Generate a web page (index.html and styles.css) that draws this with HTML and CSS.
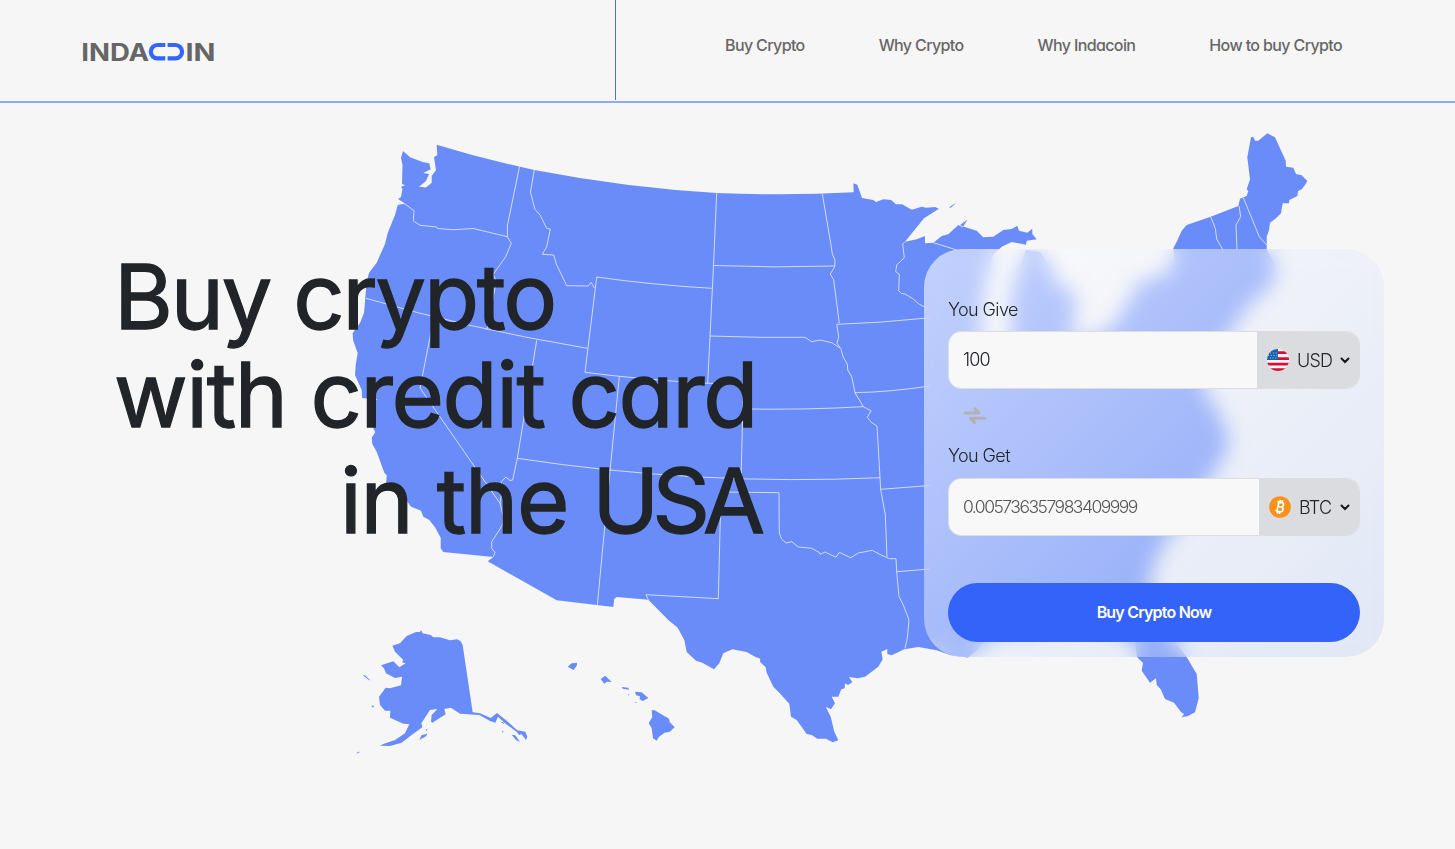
FILE: index.html
```html
<!DOCTYPE html>
<html lang="en">
<head>
<meta charset="utf-8">
<title>Indacoin</title>
<link rel="stylesheet" href="styles.css">
</head>
<body>
<header class="header">
  <div class="brand">
    <svg class="logo" width="144" height="32" viewBox="76 36 144 32" role="img" aria-label="Indacoin">
      <text class="logo-text" x="81.2" y="60.500" textLength="68" lengthAdjust="spacingAndGlyphs">INDA</text>
      <path d="M165.300 45H157.500a6.700 6.700 0 0 0 0 13.400H165.300M167.600 45H175.400a6.700 6.700 0 0 1 0 13.400H167.600" fill="none" stroke="#3366ff" stroke-width="4.200"/>
      <text class="logo-text" x="185.500" y="60.500" textLength="30" lengthAdjust="spacingAndGlyphs">IN</text>
    </svg>
  </div>
  <nav class="nav">
    <a>Buy Crypto</a>
    <a>Why Crypto</a>
    <a>Why Indacoin</a>
    <a>How to buy Crypto</a>
  </nav>
</header>
<main class="hero">
  <svg class="map" width="1455" height="746" viewBox="0 103 1455 746" aria-hidden="true">
    <g class="land">
      <path d="M403 151L410 157.3 423.3 162.3 429.3 163.3 430.7 169.3 423.3 173 429 174 426 181 419 186.7 426 187.5 431.7 182.7 431.7 176 436 170 434 157.3 437.3 155 436.7 144.7Q478 157.500 520 166.700L534.300 170Q625 187.500 716.700 193Q788 196 853.700 192.300L853.300 183.300 857.300 184.700 862 198 873.300 200 876 202 883.300 199.300 891 200 896 204.300 902 204.300 911.700 209.700 921.700 206.700 926 207.700 935 207 939 208.700 924 218.300 905 241.700 916.700 239.300 925 236 925 243.300 933.300 242.700 941.700 236 948.300 234.300 958.300 225 976.700 230.700 983.300 237.300 993.300 236.700 1003.300 230 1011.700 229 1017.300 225.700 1019 230.700 1027.300 232.700 1032.300 228.700 1032.300 234 1036.700 239.300 1026.700 240.700 1026 244.700 1011.700 242 1001.700 246.700 993 255 985 285 980 330 985 350 1006 350 1012 335 1010 300 1016 275 1026 250 1040 252 1053 270 1056 285 1072 290 1077 312 1068 337 1085 340 1112 328 1130 300 1138 283 1165 275 1175 262 1173.300 248.300 1176.700 241.700 1181.700 230.700 1186.700 225 1210.700 216.700 1238.300 206 1240 198.700 1246.700 196 1248.300 191 1246.700 189.300 1250 179.300 1247.300 157.300 1251 137.300 1253.300 136.700 1255 140.700 1258.300 140.700 1267.300 133.300 1275 137.300 1285.700 160.700 1286 166.700 1293.300 167.700 1296 174 1301.700 175.300 1307.300 181 1305 185 1301.700 189.300 1298 191 1297.300 196 1289.300 200 1289 203.300 1282.700 203.300 1281 213.300 1276 218.300 1270 222.700 1269 230 1266.700 236.700 1266.700 250 1274 262 1276 275 1268 288 1250 303 1235 325 1220 345 1205 375 1202 390 1216 407 1229 438 1225 455 1208 480 1190 515 1168 537 1155 560 1148 590 1150 610 1170 635 1186 656 1196.700 674 1198.700 698.300 1195 712.300 1188 716 1181.700 717.300 1184 714 1181 712 1174 702.700 1165 699 1160.700 689.300 1156.700 685 1156 678.300 1150 682.700 1141.700 670.700 1143 663 1137 657 1135 640 1110 628 1080 622 1040 630 1000 634 984 642 976 651 968 657.500 950 655 936.700 650.300 918.300 647 904.300 649.300 891.700 655.300 887.300 654 887.300 649 881.300 651.700 882.700 659.300 878.300 666.700 865 676.700 857.700 678.300 849 677 852.300 682.300 848 685 845 683.300 844.700 688.300 841.300 689.300 838.300 696.700 831.700 696.700 835 703.300 831 709.300 825.700 706.700 830.700 716.700 834.300 731.700 838.300 740.300 832.700 742.300 826 738.700 817.300 738.700 811.700 735 806.700 734 796.700 720 791 716.700 789.300 703.700 779.300 692.700 773.300 686.700 766.700 672.700 765.700 667.300 760 661.700 760.300 658.700 755 656.700 746.700 652 732.300 649.300 723.300 653.300 719.300 663.300 714 669.300 702.300 662.700 696 660.700 686.700 652 684.300 640 677.700 627.700 668.300 620 648.300 599.700 617 597 614.300 598.700 613.300 607 556.700 600.300 487.700 561.300 493.300 557 443.300 552 440.700 548.300 440.700 537.700 435 527.300 429.300 520 423.300 516.700 421 510.700 411 506.700 405 498 386 485 386.700 475.300 384.300 472.700 376.700 451.700 372.300 444 371.700 437.700 375.300 432 373 428 373 401 378 399.500 372 399 362 398 361.700 390 355 375 355.700 365 357.700 353 353 340 352.700 333 360 323 364 313 366 290 366.700 281.700 369 272.700 376.700 262.700 385 244 387.700 233 395 215 397.700 205 405 203.500 398 199 401 197 402.500 189 401 187 405 185 402 184 402.500 165 401 158Z"/>
      <path d="M949 208.500L950.500 206.300 956.500 202.800 952 206.800ZM960 225L967.300 219.700 963.300 226.500Z"/>
      <g transform="translate(340 610) scale(.33333)">
        <path d="M157 107L180 100 200 78 228 66 240 66 243 60 248 70 272 75 280 82 300 82 330 91 352 88 362 94 368 105 398 307 420 310 452 324 471 309 500 332 532 361 556 365 562 380 558 390 545 373 537 375 530 365 495 340 474 320 466 338 450 333 418 315 360 311 333 293 313 297 317 313 277 338 273 335 275 315 292 297 270 300 244 340 247 352 215 375 185 398 150 408 120 407 130 402 165 390 195 370 208 343 190 341 150 323 151 302 135 302 120 285 117 260 137 233 150 235 183 226 186 200 165 204 138 190 132 175 123 166 160 154 178 172 197 160 186 157 190 150 165 125Z"/>
        <path d="M238 390L245 375 262 371 258 379ZM515 374L526 376 540 396 528 390ZM483 336L490 336 492 343ZM486 360L491 366 488 368ZM49 432L54 425 60 426ZM68 196L75 196 91 211 88 211ZM93 287L102 287 100 293ZM256 359L263 357 260 363Z"/>
        <path d="M683 170L695 160 711 158 711 166 701 180ZM782 207L796 197 815 216 800 215 793 221ZM845 231L865 233 867 239 848 236ZM864 252L869 254 866 257ZM886 275L891 278 887 280ZM885 245L905 247 925 264 908 273 899 268 900 259 888 256ZM935 301L944 301 987 326 989 336 1004 352 989 365 974 368 957 380 950 392 939 385 935 354 926 340 937 321Z"/>
      </g>
    </g>
    <g class="borders">
      <path d="M397.700 203L405 204 414 210.700 413.300 221 420 225.300 436.700 227 437.500 228.500 453.300 229.700 473.300 228.500 507.300 236.700"/>
      <path d="M519.500 166.700L507.500 225 507.300 236.700 511.300 243.300 505.700 256.700 493.300 274.300 496.300 281.700 486.700 330"/>
      <path d="M534.300 170L530.500 192 533.300 203.300 535 209.300 540 215 546.700 228.300 550.300 229 546.700 246.700 542.300 254.300 553.700 255 556.700 265 566.700 285.700 588.300 286 591 282.300 594.700 288.300"/>
      <path d="M711.700 288.300Q653 285 596.700 277L585 372.300Q645 380 707.700 383.300M716.700 193L713.500 265.500 707.700 383.300L743.500 384.300 741 480"/>
      <path d="M366 298.300Q466 328 587.300 348.300M433 322L420 388 500 503.300M536.700 340.300L517.300 458.300"/>
      <path d="M517.300 458.300L512.700 480 510 480.500 506 477 501.300 481.700 501.300 495 500 503 503.300 516.700 502.700 524 499.300 530 491.700 541.700 491.700 548.300 495 552.300 493.300 557"/>
      <path d="M517.300 458.300Q700 486 880 477.700M619.300 376.700L610 471.300 597.300 605.300"/>
      <path d="M646 594.700L648.300 599.700M646 594.700L718.300 598.700 721 492 779 492.700 779.300 533.300 781.700 539 786 543 791.700 541.700 798.300 547 806.700 547.700 811.700 548.300 819 552.300 820 554.300 825 552 836 557.300 839.300 552.300 850.700 557.700 858.300 553 872.300 550.300 881.700 555.300 889.300 558.700 896 558.700 896.700 571.700 899 596.700 903.300 605 909 620 907.300 638.300 905 648.300"/>
      <path d="M822.300 194L831 245 832.300 254 835 260 834.700 266.700 830.300 274 833.700 280 839.300 323.300M836.700 324.300L838.700 336.700 837 343.300 840.700 348.300 843.300 357.300 847.300 364 847.700 370 851.700 376.700 855 392.700 863.300 406.700 871 410.700 867.300 417.300 871.700 422.700 877 426 880 477.700 880.700 489.300 885.300 515 887 556.700"/>
      <path d="M713.500 265.500Q774 268 834.700 266M836.700 324.300Q880 323 924 318.300L930 318M710 336L760 337.300 805 337.300 811.700 341.700 820 340 831.700 342.700 840 348M743 409Q806 410 863.300 406.700M855 392.700Q890 392 930 386M880.700 489.300L930 485.500M896.700 571.700L930 569"/>
      <path d="M905 241.700L902.700 244 904.300 257.700 896.700 265 895.700 271.700 899.300 274.300 898.700 290.700 901.500 293.500 905 294 913.300 299 919.300 304.300 927 308M933.300 242.700L957 250M959 225L963 227"/>
      <path d="M1210.700 216.700L1215.300 228.300 1216.700 239 1223 250M1239 206L1240.700 216.700 1236 225 1237 250M1243.300 197.700L1259.300 236.700 1266.700 245"/>
    </g>
  </svg>
  <h1 class="title">
    <span class="line l1">Buy crypto</span>
    <span class="line l2">with credit card</span>
    <span class="line l3">in the <span class="usa">USA</span></span>
  </h1>
  <section class="card">
    <div class="label">You Give</div>
    <div class="field">
      <span class="value give">100</span>
      <span class="currency usd">
        <svg class="coin" width="22" height="22" viewBox="0 0 22 22">
          <clipPath id="flag"><circle cx="11" cy="11" r="11"/></clipPath>
          <g clip-path="url(#flag)">
            <path d="M0 0H22V22H0Z" fill="#f5f5f5"/>
            <path d="M0 2.200H22V5H0ZM0 8.200H22V11H0ZM0 13.800H22V16.600H0ZM0 19.200H22V22H0Z" fill="#d80f34"/>
            <path d="M0 0H11V11H0Z" fill="#1763ad"/>
            <path d="M3 4H11M1 6.500H11M0 9H11" stroke="#a9c5e4" stroke-width="1" stroke-dasharray="1 1.800"/>
          </g>
        </svg>
        <span class="code">USD</span>
        <svg class="chevron" width="10" height="7" viewBox="0 0 10 7"><path d="M1.500 1.500L5 5 8.500 1.500"/></svg>
      </span>
    </div>
    <svg class="swap" width="24" height="18" viewBox="0 0 24 18"><path d="M2 6H16L12 1.800M22 11.300H7.500L11.500 15.700M13 3.500L15 5.500M9.500 12.500L11 14.500"/></svg>
    <div class="label second">You Get</div>
    <div class="field">
      <span class="value get">0.005736357983409999</span>
      <span class="currency btc">
        <svg class="coin" width="22" height="22" viewBox="0 0 22 22">
          <circle cx="11" cy="11" r="10.800" fill="#f7931a"/>
          <g transform="rotate(13 11 11)" fill="none" stroke="#fff" stroke-width="1.700"><path d="M7.200 6.300H11.700a2.200 2.200 0 0 1 0 4.500H9M8.900 6.300V15.500M7.200 15.500H12.200a2.350 2.350 0 0 0 0-4.700M9.800 4V6.300M12 4V6.500M9.800 15.500V18M12 15.500V18"/></g>
        </svg>
        <span class="code">BTC</span>
        <svg class="chevron" width="10" height="7" viewBox="0 0 10 7"><path d="M1.500 1.500L5 5 8.500 1.500"/></svg>
      </span>
    </div>
    <button class="buy">Buy Crypto Now</button>
  </section>
</main>
</body>
</html>
```
FILE: styles.css
```css
* { box-sizing: border-box; }
body {
  margin: 0;
  height: 849px;
  overflow: hidden;
  background: #f6f6f6;
  color: #212529;
  font-family: Inter, "Open Sans", sans-serif;
  font-feature-settings: "cv11";
}
.header {
  display: flex;
  height: 103px;
  border-bottom: 2px solid #92aaf3;
}
.brand {
  width: 616px;
  height: 100px;
  padding: 36px 0 0 76px;
  border-right: 1px solid #4b73f1;
}
.logo { display: block; }
.logo-text { font: 700 24px Inter, sans-serif; fill: #666; }
.nav {
  display: flex;
  gap: 74px;
  padding: 35px 0 0 109px;
  font-size: 16px;
  font-weight: 500;
  line-height: 20px;
  letter-spacing: -.62px;
  color: #666;
  white-space: nowrap;
}
.hero {
  position: relative;
  display: flex;
  justify-content: space-between;
  height: 746px;
  padding: 0 71px 0 114px;
}
.map { position: absolute; left: 0; top: 0; }
.land { fill: #698cf8; }
.borders { fill: none; stroke: #e9eefe; stroke-width: 1; stroke-opacity: .8; }
.title {
  position: relative;
  width: 650px;
  margin: 145px 0 0;
  font-size: 90px;
  font-weight: 400;
  white-space: nowrap;
  -webkit-text-stroke: 1.3px #212529;
}
.line { display: block; line-height: 98px; }
.l1 { letter-spacing: -2.2px; }
.l2 { letter-spacing: -1.4px; }
.l3 { line-height: 114px; padding-left: 226px; letter-spacing: -1.2px; }
.usa { letter-spacing: -7px; }
.card {
  position: relative;
  display: flex;
  flex-direction: column;
  width: 460px;
  height: 407.500px;
  margin-top: 146px;
  padding: 50px 24px 0;
  border-radius: 38px;
  background: linear-gradient(135deg, rgba(255,255,255,.6), rgba(185,203,246,.35));
  backdrop-filter: blur(10px);
}
.label {
  height: 22px;
  font-size: 18px;
  line-height: 22px;
  font-weight: 300;
  letter-spacing: -.6px;
}
.field {
  display: flex;
  justify-content: space-between;
  flex: none;
  height: 58px;
  margin-top: 10px;
  overflow: hidden;
  border: 1px solid #dcdde0;
  border-radius: 13px;
  background: #f8f8f8;
  font-size: 18px;
}
.value { padding-left: 14px; line-height: 56px; }
.give { letter-spacing: -.8px; font-weight: 350; }
.get { font-size: 17.500px; letter-spacing: -1.500px; font-weight: 300; color: #555; }
.currency {
  display: flex;
  align-items: center;
  width: 102px;
  padding: 0 9px 0 10px;
  background: #dbdce0;
  font-weight: 300;
}
.btc { width: 100px; }
.code { margin-left: 8px; letter-spacing: -.8px; }
.chevron { margin-left: auto; fill: none; stroke: #16181b; stroke-width: 2; stroke-linecap: round; }
.swap { flex: none; margin: 18px 0 0 15px; fill: none; stroke: #b2b2b5; stroke-width: 3; stroke-linecap: round; stroke-linejoin: round; }
.second { margin-top: 20px; }
.second + .field { margin-top: 11px; }
.buy {
  flex: none;
  height: 59px;
  margin-top: 47px;
  padding: 0 0 2px;
  border: 0;
  border-radius: 30px;
  background: #3463f9;
  color: #fff;
  font: 600 16px Inter, sans-serif;
  letter-spacing: -.800px;
}
```
